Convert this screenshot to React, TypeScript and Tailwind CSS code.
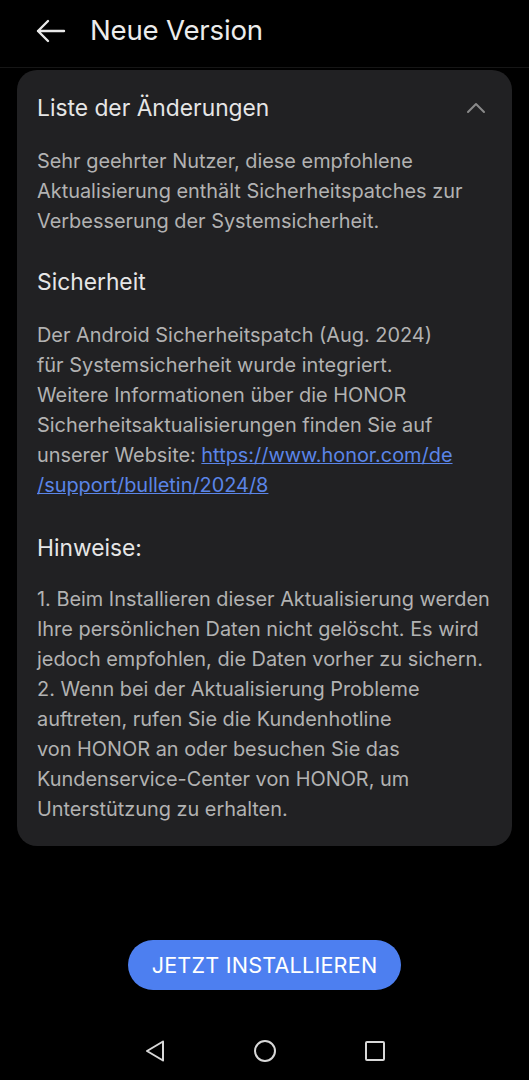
import React from "react";

const font = { fontFamily: '"Inter", "Noto Sans", sans-serif' };

function Line({ children }: { children: React.ReactNode }) {
  return <div className="whitespace-nowrap h-[30px] leading-[30px]">{children}</div>;
}

export default function App() {
  return (
    <div className="w-[529px] h-[1080px] bg-black flex flex-col" style={font}>
      <div className="h-[68px] flex items-center pb-[6px] border-b border-[#161616] shrink-0">
        <svg className="ml-[36px]" width="30" height="24" viewBox="0 0 30 24" fill="none">
          <path d="M28 12H2M12 2L2 12l10 10" stroke="#e8e8e8" strokeWidth="2.4" strokeLinecap="round" strokeLinejoin="round" />
        </svg>
        <span className="ml-[24px] text-[27.6px] text-[#ececec] tracking-[-0.2px]">Neue Version</span>
      </div>
      <div className="mx-[17px] mt-[2px] rounded-[20px] bg-[#212123] pl-[20px] pr-[20px] pb-[22px]">
        <div className="h-[76px] flex items-center justify-between">
          <span className="text-[22.8px] text-[#e6e6e6]">Liste der Änderungen</span>
          <svg className="mr-[6px]" width="20" height="12" viewBox="0 0 20 12" fill="none">
            <path d="M2 10L10 2l8 8" stroke="#8a8a8a" strokeWidth="2" strokeLinecap="round" strokeLinejoin="round" />
          </svg>
        </div>
        <div className="text-[19.9px] text-[#b2b2b2]">
          <Line>Sehr geehrter Nutzer, diese empfohlene</Line>
          <Line>Aktualisierung enthält Sicherheitspatches zur</Line>
          <Line>Verbesserung der Systemsicherheit.</Line>
        </div>
        <div className="mt-[28px] h-[36px] leading-[36px] text-[22.8px] text-[#e6e6e6]">Sicherheit</div>
        <div className="mt-[20px] text-[19.9px] text-[#b2b2b2]">
          <Line>Der Android Sicherheitspatch (Aug. 2024)</Line>
          <Line>für Systemsicherheit wurde integriert.</Line>
          <Line>Weitere Informationen über die HONOR</Line>
          <Line>Sicherheitsaktualisierungen finden Sie auf</Line>
          <Line>
            unserer Website: <span className="text-[#5b85e8] underline">https://www.honor.com/de</span>
          </Line>
          <Line>
            <span className="text-[#5b85e8] underline">/support/bulletin/2024/8</span>
          </Line>
        </div>
        <div className="mt-[30px] h-[36px] leading-[36px] text-[22.8px] text-[#e6e6e6]">Hinweise:</div>
        <div className="mt-[18px] text-[19.9px] text-[#b2b2b2]">
          <Line>1. Beim Installieren dieser Aktualisierung werden</Line>
          <Line>Ihre persönlichen Daten nicht gelöscht. Es wird</Line>
          <Line>jedoch empfohlen, die Daten vorher zu sichern.</Line>
          <Line>2. Wenn bei der Aktualisierung Probleme</Line>
          <Line>auftreten, rufen Sie die Kundenhotline</Line>
          <Line>von HONOR an oder besuchen Sie das</Line>
          <Line>Kundenservice-Center von HONOR, um</Line>
          <Line>Unterstützung zu erhalten.</Line>
        </div>
      </div>
      <div className="flex-1" />
      <div className="flex justify-center">
        <button className="w-[273px] h-[50px] rounded-full bg-[#4d7ff0] text-white text-[21.6px] tracking-[0.2px]">
          JETZT INSTALLIEREN
        </button>
      </div>
      <div className="h-[90px] pt-[32px] flex items-center justify-center shrink-0">
        <div className="flex w-[242px] justify-between items-center">
          <svg width="22" height="24" viewBox="0 0 22 24" fill="none">
            <path d="M19 2.5L3 12l16 9.5z" stroke="#d8d8d8" strokeWidth="2" strokeLinejoin="round" />
          </svg>
          <svg width="24" height="24" viewBox="0 0 24 24" fill="none">
            <circle cx="12" cy="12" r="10" stroke="#d8d8d8" strokeWidth="2" />
          </svg>
          <svg width="22" height="22" viewBox="0 0 22 22" fill="none">
            <rect x="2" y="2" width="18" height="18" rx="1" stroke="#d8d8d8" strokeWidth="2" />
          </svg>
        </div>
      </div>
    </div>
  );
}
